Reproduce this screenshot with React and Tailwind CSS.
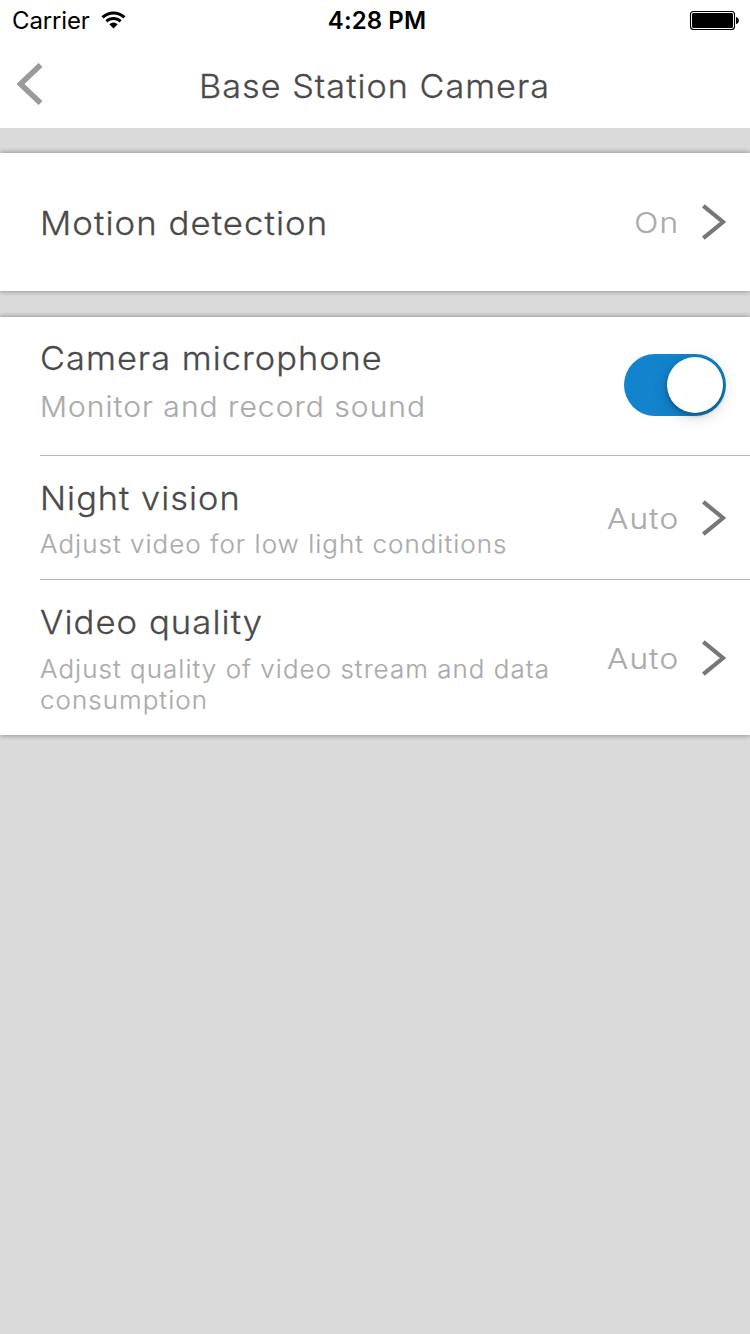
function StatusBar() {
  return (
    <div className="flex h-10 items-center justify-between pl-3 pr-[11px] text-2xl leading-10 text-black">
      <div className="flex flex-1 items-center">
        <span className="mt-0.5 tracking-[-0.15px]">Carrier</span>
        <svg className="ml-[11px] h-[18px] w-[25px]" viewBox="0 0 25 18">
          <path d="M0.500 5.300C7.300 -1 17.700 -1 24.500 5.300L22.400 7.500C16.700 2.300 8.300 2.300 2.600 7.500Z" />
          <path d="M4.400 9.300C9 5 16 5 20.600 9.300L18.500 11.500C15 8.300 10 8.300 6.500 11.500Z" />
          <path d="M8.300 13.200Q12.500 9.800 16.700 13.200L12.500 17.500Z" />
        </svg>
      </div>
      <span className="ml-[3px] mt-0.5 font-semibold tracking-[0.1px]">4:28 PM</span>
      <div className="flex flex-1 justify-end">
        <svg className="h-5 w-[50px]" viewBox="0 0 50 20">
          <rect x="1.500" y="1.500" width="44" height="18" rx="3" fill="none" stroke="black" strokeWidth="1.100" />
          <rect x="3" y="3" width="41" height="15" rx="1.500" />
          <path d="M47 7Q49.800 7.500 49.800 10.500T47 14Z" />
        </svg>
      </div>
    </div>
  );
}

function Chevron() {
  return (
    <svg className="h-9 w-6 shrink-0" viewBox="0 0 24 36">
      <path d="M1.300 1.800L21 18L1.300 34.200" fill="none" stroke="#777777" strokeWidth="4.200" />
    </svg>
  );
}

function Title({ children, className }) {
  return (
    <h2
      className={`origin-left whitespace-nowrap text-[33px] font-light leading-10 tracking-[1px] [-webkit-text-stroke:0.3px_#4a4a4a] ${className}`}
    >
      {children}
    </h2>
  );
}

function Value({ children }) {
  return (
    <div className="flex items-center">
      <span className="mr-[23px] mt-0.5 origin-right scale-x-[1.09] text-[29px] font-light leading-9 tracking-[1px] text-[#ababab] [-webkit-text-stroke:0.2px_#ababab]">
        {children}
      </span>
      <Chevron />
    </div>
  );
}

export default function App() {
  return (
    <div className="min-h-[1334px] w-[750px] overflow-hidden bg-[#dadada] font-['Inter',sans-serif] font-normal text-[#4a4a4a]">
      <header className="h-32 bg-white">
        <StatusBar />
        <div className="flex h-[88px] items-center pl-4">
          <svg className="h-[42px] w-[27px]" viewBox="0 0 27 42">
            <path d="M24.500 2L4.500 21L24.500 40" fill="none" stroke="#9b9b9b" strokeWidth="5.600" />
          </svg>
          <Title className="ml-[156px] mt-1 scale-x-[1.036]">Base Station Camera</Title>
        </div>
      </header>

      <section className="mt-[25px] flex h-[138px] items-center justify-between bg-white pl-10 pr-6 shadow-[0_2px_4px_rgba(0,0,0,0.2),0_-2px_4px_rgba(0,0,0,0.2)]">
        <Title className="mt-0.5 scale-x-[1.053]">Motion detection</Title>
        <Value>On</Value>
      </section>

      <section className="mt-[26px] h-[418px] bg-white pl-10 shadow-[0_2px_4px_rgba(0,0,0,0.2),0_-2px_4px_rgba(0,0,0,0.2)]">
        <div className="flex h-[139px] justify-between border-b border-[#b9b9b9] pr-6">
          <div className="pt-[21px]">
            <Title className="scale-x-[1.04]">Camera microphone</Title>
            <p className="mt-[9px] origin-left scale-x-[1.034] text-[29px] font-light leading-10 tracking-[1px] text-[#ababab] [-webkit-text-stroke:0.2px_#ababab]">
              Monitor and record sound
            </p>
          </div>
          <button role="switch" aria-checked="true" className="mt-[37px] flex h-[62px] w-[102px] items-center justify-end rounded-full bg-[#1283cc] pr-[3px]">
            <span className="size-14 rounded-full bg-white shadow-[0_4px_16px_rgba(0,0,0,0.18),0_2px_4px_rgba(0,0,0,0.3)]" />
          </button>
        </div>
        <div className="flex h-[124px] justify-between border-b border-[#b9b9b9] pr-6">
          <div className="pt-[22px]">
            <Title className="scale-x-[1.04]">Night vision</Title>
            <p className="mt-[11px] origin-left scale-x-[1.038] whitespace-nowrap text-[25px] font-light leading-[31px] tracking-[1px] text-[#ababab] [-webkit-text-stroke:0.2px_#ababab]">
              Adjust video for low light conditions
            </p>
          </div>
          <Value>Auto</Value>
        </div>
        <div className="flex h-[155px] justify-between pr-6">
          <div className="pt-[22px]">
            <Title className="scale-x-[1.05]">Video quality</Title>
            <p className="mt-[12px] origin-left scale-x-[1.038] whitespace-nowrap text-[25px] font-light leading-[31px] tracking-[1px] text-[#ababab] [-webkit-text-stroke:0.2px_#ababab]">
              Adjust quality of video stream and data
              <br />
              consumption
            </p>
          </div>
          <Value>Auto</Value>
        </div>
      </section>
    </div>
  );
}
